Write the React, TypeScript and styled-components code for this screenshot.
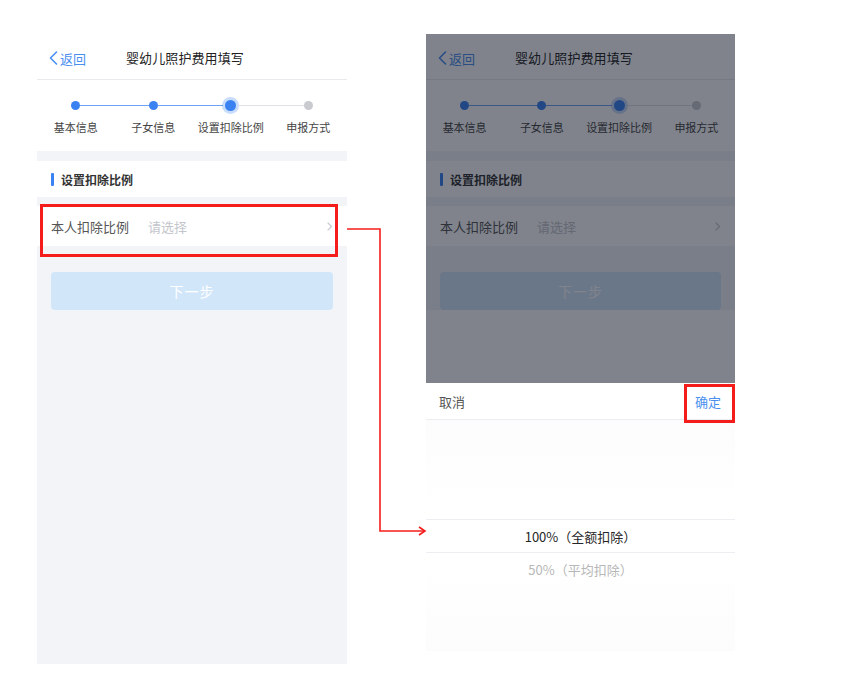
import React from 'react';
import styled, { createGlobalStyle } from 'styled-components';

const GlobalStyle = createGlobalStyle`
  html, body {
    margin: 0;
    padding: 0;
    background: #ffffff;
  }
  body {
    font-family: "Noto Sans CJK SC", "Noto Sans", "Liberation Sans", sans-serif;
    -webkit-font-smoothing: antialiased;
  }
`;

const Page = styled.div`
  position: relative;
  width: 860px;
  height: 692px;
  display: flex;
  align-items: flex-start;
  gap: 79px;
  padding: 34px 0 0 37px;
  box-sizing: border-box;
`;

const Phone = styled.div<{ $width: number; $bg: string }>`
  position: relative;
  width: ${(p) => p.$width}px;
  height: 630px;
  display: flex;
  flex-direction: column;
  background: ${(p) => p.$bg};
  overflow: hidden;
`;

const Screen = styled.div`
  display: flex;
  flex-direction: column;
  background: #f3f4f8;
`;

const NavBar = styled.div`
  height: 46px;
  display: flex;
  align-items: center;
  padding: 3px 0 0 12px;
  box-sizing: border-box;
  background: #ffffff;
  border-bottom: 1px solid #e9eaee;
`;

const Back = styled.div`
  display: flex;
  align-items: center;
  gap: 2px;
  white-space: nowrap;
  font-size: 13px;
  color: #4a8ff0;
`;

const Title = styled.div`
  margin: 0 0 2px 40px;
  font-size: 13px;
  color: #222222;
  white-space: nowrap;
  letter-spacing: 0.1px;
`;

const Steps = styled.div`
  display: grid;
  grid-template-columns: repeat(4, 1fr);
  padding: 17px 0 16px;
  background: #ffffff;
`;

const Step = styled.div`
  display: flex;
  flex-direction: column;
  align-items: center;
  gap: 6px;
`;

const Track = styled.div`
  width: 100%;
  height: 16px;
  display: flex;
  align-items: center;
`;

const HalfLine = styled.div<{ $color?: string }>`
  flex: 1;
  height: 1px;
  background: ${(p) => p.$color ?? 'transparent'};
`;

const Dot = styled.div<{ $state: 'done' | 'active' | 'todo' }>`
  width: ${(p) => (p.$state === 'active' ? 11 : 9)}px;
  height: ${(p) => (p.$state === 'active' ? 11 : 9)}px;
  margin: 0 ${(p) => (p.$state === 'active' ? 2 : 0)}px;
  border-radius: 50%;
  background: ${(p) => (p.$state === 'todo' ? '#c8cad0' : '#3a82f2')};
  box-shadow: ${(p) =>
    p.$state === 'active' ? '0 0 0 3px rgba(58, 130, 242, 0.28)' : 'none'};
`;

const StepLabel = styled.div`
  font-size: 11px;
  color: #444444;
  white-space: nowrap;
`;

const Gap = styled.div<{ $h: number }>`
  height: ${(p) => p.$h}px;
`;

const SectionHead = styled.div`
  height: 36px;
  display: flex;
  align-items: center;
  gap: 7px;
  padding-left: 14px;
  background: #ffffff;
  font-size: 12px;
  font-weight: 700;
  color: #333333;
`;

const SectionBar = styled.div`
  width: 3px;
  height: 13px;
  border-radius: 1px;
  background: #3a82f2;
`;

const FieldWrap = styled.div`
  position: relative;
`;

const Field = styled.div`
  height: 40px;
  display: flex;
  align-items: center;
  padding: 0 14px;
  background: #ffffff;
  font-size: 13px;
`;

const FieldLabel = styled.div`
  width: 97px;
  color: #555555;
`;

const FieldValue = styled.div`
  flex: 1;
  color: #c3c6cc;
`;

const Highlight = styled.div<{ $inset: string }>`
  position: absolute;
  inset: ${(p) => p.$inset};
  box-sizing: border-box;
  border: 3px solid #f51c1c;
  pointer-events: none;
`;

const NextButton = styled.div`
  margin: 26px 14px 0;
  height: 38px;
  display: flex;
  align-items: center;
  justify-content: center;
  border-radius: 4px;
  background: #d2e6fa;
  color: #ffffff;
  font-size: 14px;
  letter-spacing: 1px;
`;

const DimArea = styled.div`
  position: relative;
  height: 349px;
  overflow: hidden;
  flex-shrink: 0;
`;

const Overlay = styled.div`
  position: absolute;
  inset: 0;
  background: rgba(12, 18, 32, 0.52);
`;

const Sheet = styled.div`
  display: flex;
  flex-direction: column;
  background: #ffffff;
`;

const SheetBar = styled.div`
  position: relative;
  height: 36px;
  display: flex;
  align-items: center;
  justify-content: space-between;
  padding: 0 14px 0 13px;
  border-bottom: 1px solid #ebedf0;
  font-size: 13px;
`;

const BarAction = styled.div<{ $primary?: boolean }>`
  color: ${(p) => (p.$primary ? '#4a8ff0' : '#555555')};
`;

const Picker = styled.div`
  height: 231px;
  display: flex;
  flex-direction: column;
  padding-top: 99px;
  box-sizing: border-box;
  background: linear-gradient(
    180deg,
    #fcfcfc 0%,
    #ffffff 40%,
    #ffffff 60%,
    #fcfcfc 100%
  );
`;

const Option = styled.div<{ $selected?: boolean }>`
  height: 32px;
  display: flex;
  align-items: center;
  justify-content: center;
  font-size: 13px;
  color: ${(p) => (p.$selected ? '#262626' : '#b8b8b8')};
  border-top: ${(p) => (p.$selected ? '1px solid #eceef1' : 'none')};
  border-bottom: ${(p) => (p.$selected ? '1px solid #eceef1' : 'none')};
`;

const Connector = styled.svg`
  position: absolute;
  left: 0;
  top: 0;
  pointer-events: none;
`;

const BackIcon = () => (
  <svg width="9" height="14" viewBox="0 0 9 14">
    <polyline
      points="7.5,1 1.5,7 7.5,13"
      fill="none"
      stroke="#4a8ff0"
      strokeWidth="1.6"
      strokeLinecap="round"
      strokeLinejoin="round"
    />
  </svg>
);

const ChevronIcon = () => (
  <svg width="6" height="9" viewBox="0 0 6 9">
    <polyline
      points="1,1 4.5,4.5 1,8"
      fill="none"
      stroke="#c9ccd2"
      strokeWidth="1.2"
      strokeLinecap="round"
      strokeLinejoin="round"
    />
  </svg>
);

type StepState = 'done' | 'active' | 'todo';

const steps: { label: string; state: StepState }[] = [
  { label: '基本信息', state: 'done' },
  { label: '子女信息', state: 'done' },
  { label: '设置扣除比例', state: 'active' },
  { label: '申报方式', state: 'todo' },
];

const BLUE_LINE = '#6ea3f6';
const GRAY_LINE = '#dfe1e5';

const lineColor = (index: number) => (index < 2 ? BLUE_LINE : GRAY_LINE);

const FormScreen = ({ marked }: { marked?: boolean }) => (
  <Screen>
    <NavBar>
      <Back>
        <BackIcon />
        返回
      </Back>
      <Title>婴幼儿照护费用填写</Title>
    </NavBar>

    <Steps>
      {steps.map((step, i) => (
        <Step key={step.label}>
          <Track>
            <HalfLine $color={i > 0 ? lineColor(i - 1) : undefined} />
            <Dot $state={step.state} />
            <HalfLine $color={i < steps.length - 1 ? lineColor(i) : undefined} />
          </Track>
          <StepLabel>{step.label}</StepLabel>
        </Step>
      ))}
    </Steps>

    <Gap $h={10} />
    <SectionHead>
      <SectionBar />
      设置扣除比例
    </SectionHead>
    <Gap $h={9} />

    <FieldWrap>
      <Field>
        <FieldLabel>本人扣除比例</FieldLabel>
        <FieldValue>请选择</FieldValue>
        <ChevronIcon />
      </Field>
      {marked && <Highlight $inset="-2px 9px -11px 3px" />}
    </FieldWrap>

    <NextButton>下一步</NextButton>
  </Screen>
);

export default function App() {
  return (
    <>
      <GlobalStyle />
      <Page>
        <Phone $width={310} $bg="#f3f4f8">
          <FormScreen marked />
        </Phone>

        <Phone $width={309} $bg="#ffffff">
          <DimArea>
            <FormScreen />
            <Overlay />
          </DimArea>
          <Sheet>
            <SheetBar>
              <BarAction>取消</BarAction>
              <BarAction $primary>确定</BarAction>
              <Highlight $inset="1px 0 -4px auto" style={{ width: 51 }} />
            </SheetBar>
            <Picker>
              <Option $selected>100%（全额扣除）</Option>
              <Option>50%（平均扣除）</Option>
            </Picker>
          </Sheet>
        </Phone>

        <Connector width="860" height="692" viewBox="0 0 860 692">
          <polyline
            points="347,229 380,229 380,531 424,531"
            fill="none"
            stroke="#f51c1c"
            strokeWidth="1.6"
          />
          <polyline
            points="419,527 425,531 419,535"
            fill="none"
            stroke="#f51c1c"
            strokeWidth="1.6"
          />
        </Connector>
      </Page>
    </>
  );
}
